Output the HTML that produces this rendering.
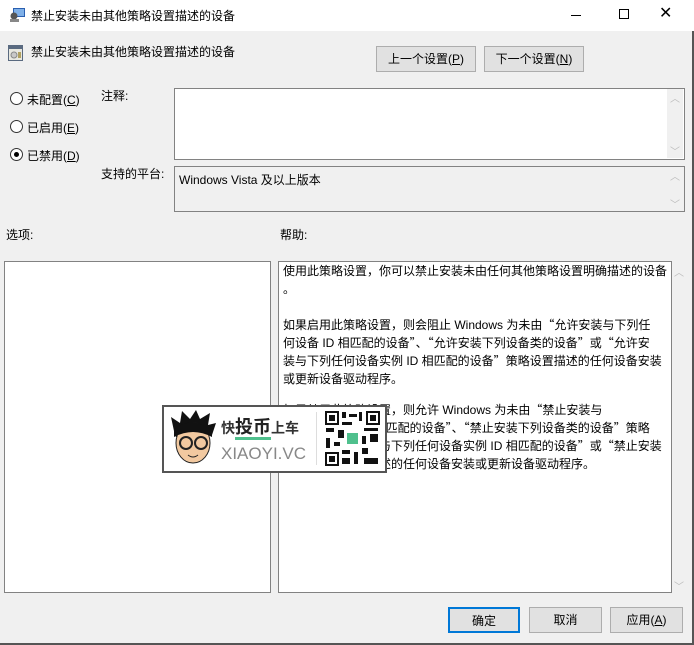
<!DOCTYPE html>
<html><head><meta charset="utf-8">
<style>
*{margin:0;padding:0;box-sizing:border-box}
body{width:694px;height:645px;background:#f0f0f0;font-family:"Liberation Sans","Noto Sans CJK SC",sans-serif;font-size:12px;color:#000;position:relative;overflow:hidden}
.a{position:absolute}
.title{left:0;top:0;width:694px;height:31px;background:#fff}
.btn{position:absolute;background:#e1e1e1;border:1px solid #adadad;text-align:center;font-size:12px}
.box{position:absolute;border:1px solid #828282;background:#fff}
.sb{position:absolute;color:#bbb;font-size:10px}
.radio{position:absolute;width:13px;height:13px;border:1px solid #333;border-radius:50%;background:#fff}
.help{white-space:nowrap}
.q{font-family:"Noto Sans CJK SC",sans-serif}
</style></head><body>
<div class="a" style="right:0;top:0;width:2px;height:645px;background:#555"></div>
<div class="a" style="left:0;bottom:0;width:694px;height:2px;background:#555"></div>
<div class="a title"></div>
<svg class="a" style="left:9px;top:7px" width="17" height="16"><rect x="4" y="1" width="12" height="9" fill="#2a5fb0"/><rect x="5" y="2" width="10" height="7" fill="#7fb0e8"/><circle cx="5" cy="9" r="3.5" fill="#555"/><rect x="1" y="12" width="9" height="3" fill="#888"/></svg>
<div class="a" style="left:31px;top:7px;font-size:12px">禁止安装未由其他策略设置描述的设备</div>
<div class="a" style="left:571px;top:15px;width:10px;height:1px;background:#000"></div>
<div class="a" style="left:619px;top:9px;width:10px;height:10px;border:1px solid #000"></div>
<div class="a" style="left:659px;top:4px;font-size:16px;line-height:20px">✕</div>

<svg class="a" style="left:7px;top:44px" width="17" height="18"><rect x="1" y="1" width="15" height="16" fill="#5a6a80"/><rect x="2" y="5" width="13" height="11" fill="#e8e8e0"/><circle cx="7" cy="11" r="3" fill="#c8c8c8" stroke="#888"/><rect x="11" y="8" width="3" height="6" fill="#b0a060"/></svg>
<div class="a" style="left:31px;top:43px">禁止安装未由其他策略设置描述的设备</div>

<div class="btn" style="left:376px;top:46px;width:100px;height:26px;line-height:24px">上一个设置(<u>P</u>)</div>
<div class="btn" style="left:484px;top:46px;width:100px;height:26px;line-height:24px">下一个设置(<u>N</u>)</div>

<div class="radio" style="left:10px;top:92px"></div><div class="a" style="left:27px;top:91px">未配置(<u>C</u>)</div>
<div class="radio" style="left:10px;top:120px"></div><div class="a" style="left:27px;top:119px">已启用(<u>E</u>)</div>
<div class="radio" style="left:10px;top:148px"></div><div class="a" style="left:14px;top:152px;width:5px;height:5px;border-radius:50%;background:#000"></div><div class="a" style="left:27px;top:147px">已禁用(<u>D</u>)</div>

<div class="a" style="left:101px;top:87px">注释:</div>
<div class="box" style="left:174px;top:88px;width:511px;height:72px"></div>
<div class="a" style="left:667px;top:89px;width:16px;height:69px;background:#f0f0f0"></div>
<div class="sb" style="left:670px;top:90px">︿</div><div class="sb" style="left:670px;top:143px">﹀</div>
<div class="a" style="left:101px;top:165px">支持的平台:</div>
<div class="box" style="left:174px;top:166px;width:511px;height:46px;background:#f0f0f0"></div>
<div class="a" style="left:179px;top:171px">Windows Vista 及以上版本</div>
<div class="sb" style="left:670px;top:168px">︿</div><div class="sb" style="left:670px;top:196px">﹀</div>

<div class="a" style="left:6px;top:226px">选项:</div>
<div class="a" style="left:280px;top:226px">帮助:</div>

<div class="box" style="left:4px;top:261px;width:267px;height:332px"></div>
<div class="box" style="left:278px;top:261px;width:394px;height:332px"></div>
<div class="a help" style="left:283px;top:262px;line-height:18px">
使用此策略设置，你可以禁止安装未由任何其他策略设置明确描述的设备<br>。<br><br>
如果启用此策略设置，则会阻止 Windows 为未由<span class="q">“</span>允许安装与下列任<br>
何设备 ID 相匹配的设备<span class="q">”、“</span>允许安装下列设备类的设备<span class="q">”</span>或<span class="q">“</span>允许安<br>
装与下列任何设备实例 ID 相匹配的设备<span class="q">”</span>策略设置描述的任何设备安装<br>
或更新设备驱动程序。<br><br>
<span style="position:relative;top:-5px">如果禁用此策略设置，则允许 Windows 为未由<span class="q">“</span>禁止安装与</span><br>
<span style="position:relative;top:-5px">下列任何设备 ID 相匹配的设备<span class="q">”、“</span>禁止安装下列设备类的设备<span class="q">”</span>策略</span><br>
<span style="position:relative;top:-5px">设置或<span class="q">“</span>禁止安装与下列任何设备实例 ID 相匹配的设备<span class="q">”</span>或<span class="q">“</span>禁止安装</span><br>
<span style="position:relative;top:-5px">与下列任何设备描述的任何设备安装或更新设备驱动程序。</span>
</div>
<div class="sb" style="left:674px;top:264px">︿</div><div class="sb" style="left:674px;top:578px">﹀</div>

<div class="btn" style="left:448px;top:607px;width:72px;height:26px;line-height:24px;border:2px solid #0078d7">确定</div>
<div class="btn" style="left:529px;top:607px;width:73px;height:26px;line-height:24px">取消</div>
<div class="btn" style="left:610px;top:607px;width:73px;height:26px;line-height:24px">应用(<u>A</u>)</div>

<!-- overlay -->
<div class="a" style="left:162px;top:405px;width:225px;height:68px;background:#fff;border:2px solid #555"></div>
<svg class="a" style="left:168px;top:409px" width="50" height="60"><path d="M6 22 L3 8 L12 14 L14 2 L22 10 L28 1 L32 10 L42 4 L40 16 L48 14 L44 26 L8 28Z" fill="#111"/><ellipse cx="25" cy="34" rx="17" ry="20" fill="#f2c9a0" stroke="#222"/><path d="M6 20 Q25 6 44 22 L44 28 Q25 18 6 28Z" fill="#111"/><circle cx="18" cy="34" r="6" fill="none" stroke="#222" stroke-width="2"/><circle cx="33" cy="34" r="6" fill="none" stroke="#222" stroke-width="2"/><path d="M20 46 Q25 50 30 46" fill="none" stroke="#222"/></svg>
<div class="a" style="left:221px;top:416px;font-size:14px;font-weight:bold;color:#333;white-space:nowrap;line-height:22px">快<span style="font-size:18px;color:#222;border-bottom:3px solid #4fc08d">投币</span>上车</div>
<div class="a" style="left:221px;top:444px;font-size:17px;color:#888;white-space:nowrap">XIAOYI.VC</div>
<div class="a" style="left:316px;top:412px;width:1px;height:53px;background:#ddd"></div>
<svg class="a" style="left:324px;top:410px" width="57" height="57"><rect width="57" height="57" fill="#fff"/><g fill="#111"><rect x="1" y="1" width="14" height="14"/><rect x="42" y="1" width="14" height="14"/><rect x="1" y="42" width="14" height="14"/></g><g fill="#fff"><rect x="3" y="3" width="10" height="10"/><rect x="44" y="3" width="10" height="10"/><rect x="3" y="44" width="10" height="10"/></g><g fill="#111"><rect x="5" y="5" width="6" height="6"/><rect x="46" y="5" width="6" height="6"/><rect x="5" y="46" width="6" height="6"/><rect x="18" y="2" width="4" height="6"/><rect x="25" y="4" width="8" height="3"/><rect x="35" y="2" width="3" height="9"/><rect x="18" y="12" width="10" height="3"/><rect x="2" y="18" width="8" height="4"/><rect x="14" y="20" width="6" height="8"/><rect x="40" y="18" width="14" height="3"/><rect x="46" y="24" width="8" height="8"/><rect x="2" y="28" width="4" height="10"/><rect x="10" y="32" width="6" height="4"/><rect x="18" y="40" width="8" height="4"/><rect x="30" y="42" width="4" height="12"/><rect x="38" y="38" width="6" height="6"/><rect x="40" y="48" width="14" height="6"/><rect x="18" y="48" width="8" height="6"/><rect x="38" y="26" width="4" height="8"/></g><rect x="23" y="23" width="11" height="11" fill="#4fc08d"/></svg>
</body></html>
